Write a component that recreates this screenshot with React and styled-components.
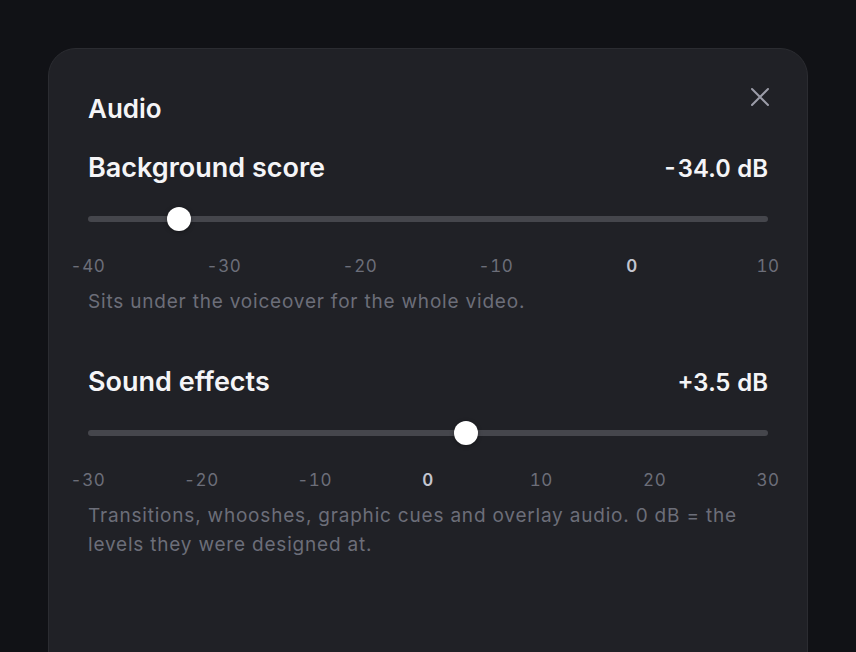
import React, { useState } from 'react';
import styled, { createGlobalStyle } from 'styled-components';

const GlobalStyle = createGlobalStyle`
  html, body {
    margin: 0;
    padding: 0;
    background: #111216;
    overflow: hidden;
  }
  body {
    font-family: Inter, "Noto Sans", sans-serif;
    -webkit-font-smoothing: antialiased;
  }
`

const Page = styled.div`
  padding: 48px 48px 0;
  height: 652px;
  box-sizing: border-box;
`

const Panel = styled.div`
  position: relative;
  background: #202126;
  border: 1px solid #2b2c31;
  border-radius: 28px;
  min-height: 640px;
  padding: 44px 39px 40px;
  box-sizing: border-box;
`

const Title = styled.h2`
  margin: 0 0 26px;
  font-size: 26px;
  line-height: 32px;
  font-weight: 600;
  color: #f5f5f7;
`

const Close = styled.button`
  position: absolute;
  top: 38px;
  right: 37px;
  width: 20px;
  height: 20px;
  padding: 0;
  border: 0;
  background: none;
  color: #9b9ca8;
  cursor: pointer;

  svg {
    display: block;
  }
`

const Section = styled.section`
  & + & {
    margin-top: 49px;
  }
`

const Head = styled.div`
  display: flex;
  justify-content: space-between;
  align-items: baseline;
`

const Label = styled.h3`
  margin: 0;
  font-size: 27px;
  line-height: 34px;
  font-weight: 600;
  color: #f5f5f7;
`

const Value = styled.span`
  font-size: 24px;
  font-weight: 600;
  color: #f5f5f7;
  font-variant-numeric: tabular-nums;
`

const Range = styled.input`
  -webkit-appearance: none;
  appearance: none;
  display: block;
  width: 100%;
  height: 24px;
  margin: 22px 0 0;
  background: transparent;
  cursor: pointer;

  &::-webkit-slider-runnable-track {
    height: 6px;
    border-radius: 3px;
    background: #45464c;
  }

  &::-webkit-slider-thumb {
    -webkit-appearance: none;
    width: 24px;
    height: 24px;
    margin-top: -9px;
    border-radius: 50%;
    background: #ffffff;
    box-shadow: 0 1px 4px rgba(0, 0, 0, 0.35);
  }

  &:focus {
    outline: none;
  }
`

const Scale = styled.div`
  position: relative;
  height: 20px;
  margin-top: 25px;
`

const Tick = styled.span`
  position: absolute;
  top: 0;
  transform: translateX(-50%);
  font-size: 17px;
  line-height: 20px;
  letter-spacing: 0.6px;
  font-variant-numeric: tabular-nums;
  white-space: nowrap;
  color: ${p => (p.$zero ? '#c3c5cf' : '#6c6e79')};
  font-weight: ${p => (p.$zero ? 600 : 400)};
`

const Hint = styled.p`
  margin: 11px 0 0;
  font-size: 19px;
  line-height: 29px;
  letter-spacing: 0.8px;
  color: #6c6e79;
`

const fmt = v => `${v > 0 ? '+' : v < 0 ? '-' : ''}${Math.abs(v).toFixed(1)} dB`

function Slider({ label, min, max, step, ticks, initial, hint }) {
  const [value, setValue] = useState(initial)
  return (
    <Section>
      <Head>
        <Label>{label}</Label>
        <Value>{fmt(value)}</Value>
      </Head>
      <Range
        type="range"
        min={min}
        max={max}
        step={step}
        value={value}
        onChange={e => setValue(parseFloat(e.target.value))}
      />
      <Scale>
        {ticks.map(t => (
          <Tick key={t} $zero={t === 0} style={{ left: `${((t - min) / (max - min)) * 100}%` }}>
            {t < 0 ? `-${Math.abs(t)}` : t}
          </Tick>
        ))}
      </Scale>
      <Hint>{hint}</Hint>
    </Section>
  )
}

export default function App() {
  return (
    <>
      <GlobalStyle />
      <Page>
        <Panel>
          <Title>Audio</Title>
          <Close aria-label="Close">
            <svg width="20" height="20" viewBox="0 0 20 20" fill="none" stroke="currentColor" strokeWidth="2" strokeLinecap="round">
              <path d="M2 2L18 18M18 2L2 18" />
            </svg>
          </Close>
          <Slider
            label="Background score"
            min={-40}
            max={10}
            step={0.5}
            initial={-34}
            ticks={[-40, -30, -20, -10, 0, 10]}
            hint="Sits under the voiceover for the whole video."
          />
          <Slider
            label="Sound effects"
            min={-30}
            max={30}
            step={0.5}
            initial={3.5}
            ticks={[-30, -20, -10, 0, 10, 20, 30]}
            hint="Transitions, whooshes, graphic cues and overlay audio. 0 dB = the levels they were designed at."
          />
        </Panel>
      </Page>
    </>
  )
}
